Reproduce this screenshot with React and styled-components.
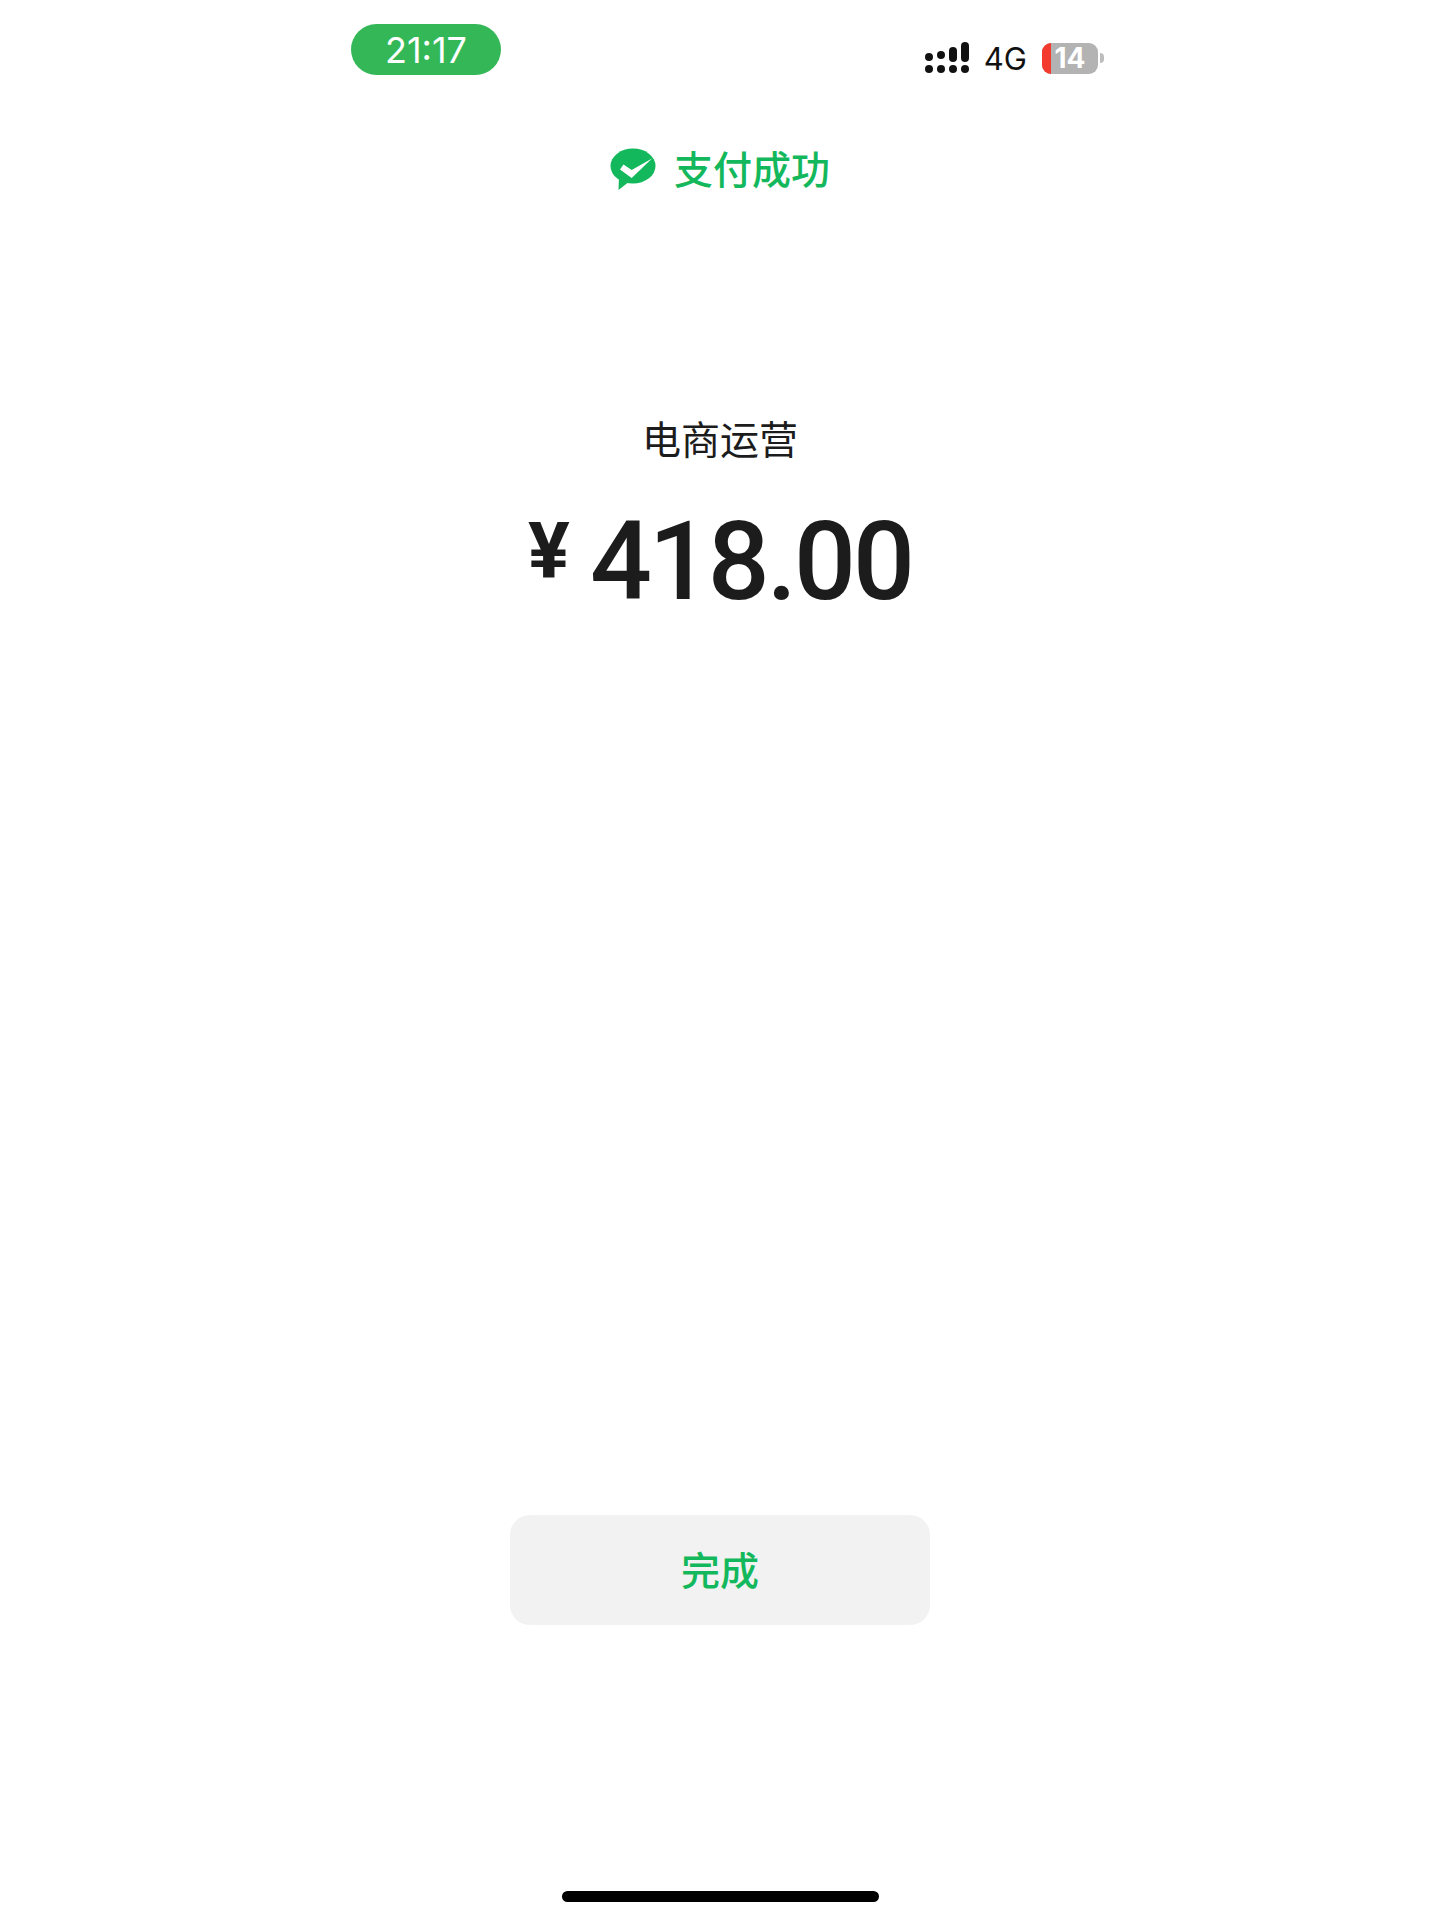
import React from "react";
import styled, { createGlobalStyle } from "styled-components";

const Global = createGlobalStyle`
  html, body { margin: 0; padding: 0; background: #fff; }
`;

const CJK = `"Noto Sans CJK SC", "Noto Sans", sans-serif`;

const Page = styled.div`
  width: 1440px;
  height: 1920px;
  display: flex;
  flex-direction: column;
  align-items: center;
  background: #fff;
  overflow: hidden;
`;

const StatusBar = styled.header`
  width: 780px;
  height: 100px;
  box-sizing: border-box;
  padding: 24px 6px 0 21px;
  display: flex;
  justify-content: space-between;
  align-items: flex-start;
`;

const TimePill = styled.div`
  width: 150px;
  height: 51px;
  border-radius: 26px;
  background: #34b857;
  color: #fff;
  display: flex;
  align-items: center;
  justify-content: center;
  font: 400 36px/1 Inter, "Liberation Sans", sans-serif;
`;

const Indicators = styled.div`
  display: flex;
  align-items: center;
  height: 32px;
  margin-top: 18px;
`;

const NetworkLabel = styled.span`
  font: 400 31px/1 Inter, "Liberation Sans", sans-serif;
  color: #111;
  margin: 0 15px;
`;

const Battery = styled.div`
  position: relative;
  width: 56px;
  height: 31px;
  border-radius: 9px;
  background: #b3b3b3;
  overflow: hidden;
  color: #fff;
  display: flex;
  align-items: center;
  justify-content: center;
  box-sizing: border-box;
  font: 700 28px/1 Inter, "Liberation Sans", sans-serif;
`;

const BatteryLevel = styled.div`
  position: absolute;
  left: 0;
  top: 0;
  bottom: 0;
  width: 9px;
  background: #f4392f;
`;

const BatteryCap = styled.div`
  width: 4px;
  height: 10px;
  margin-left: 2px;
  border-radius: 0 4px 4px 0;
  background: #bdbdbd;
`;

const Title = styled.div`
  display: flex;
  align-items: center;
  gap: 18px;
  margin-top: 48px;
  height: 42px;
  color: #14b85c;
  font: 500 39px/42px ${CJK};
`;

const TitleText = styled.span`
  padding-bottom: 4px;
`;

const Merchant = styled.div`
  margin-top: 219px;
  height: 56px;
  color: #1c1c1c;
  font: 400 39px/56px ${CJK};
`;

const Amount = styled.div`
  margin-top: 42px;
  display: flex;
  align-items: flex-start;
  gap: 20px;
  height: 110px;
  color: #1c1c1c;
  font-family: Roboto, "Liberation Sans", sans-serif;
  font-weight: 500;
`;

const Currency = styled.span`
  font-size: 78px;
  line-height: 90px;
  font-weight: 700;
`;

const Value = styled.span`
  font-size: 109px;
  line-height: 110px;
  letter-spacing: -3px;
`;

const Spacer = styled.div`
  flex: 1;
`;

const DoneButton = styled.button`
  width: 420px;
  height: 110px;
  border: 0;
  border-radius: 20px;
  background: #f2f2f2;
  color: #14b85c;
  font: 500 39px/1 ${CJK};
  padding: 0 0 4px;
`;

const HomeBar = styled.div`
  width: 317px;
  height: 11px;
  margin: 266px 0 18px;
  border-radius: 6px;
  background: #000;
`;

const SignalIcon = () => (
  <svg width="44" height="32" viewBox="0 0 44 32" fill="#111" aria-hidden="true">
    <circle cx="4" cy="15" r="4" />
    <circle cx="4" cy="27" r="4" />
    <circle cx="16" cy="13" r="4" />
    <circle cx="16" cy="27" r="4" />
    <rect x="24" y="5" width="8" height="15" rx="4" />
    <circle cx="28" cy="27" r="4" />
    <rect x="36" y="0" width="8" height="20" rx="4" />
    <circle cx="40" cy="27" r="4" />
  </svg>
);

const WechatIcon = () => (
  <svg width="46" height="42" viewBox="0 0 46 42" aria-hidden="true">
    <ellipse cx="23" cy="18" rx="22.5" ry="17.5" fill="#14b85c" />
    <path d="M9 28 L8.5 42 L20 33 Z" fill="#14b85c" />
    <path d="M10 21.5 L13.5 16.5 L21.7 22 L42 10.5 L21.7 30 Z" fill="#fff" />
  </svg>
);

export default function App() {
  return (
    <Page>
      <Global />
      <StatusBar>
        <TimePill>21:17</TimePill>
        <Indicators>
          <SignalIcon />
          <NetworkLabel>4G</NetworkLabel>
          <Battery>
            <BatteryLevel />
            14
          </Battery>
          <BatteryCap />
        </Indicators>
      </StatusBar>
      <Title>
        <WechatIcon />
        <TitleText>支付成功</TitleText>
      </Title>
      <Merchant>电商运营</Merchant>
      <Amount>
        <Currency>¥</Currency>
        <Value>418.00</Value>
      </Amount>
      <Spacer />
      <DoneButton>完成</DoneButton>
      <HomeBar />
    </Page>
  );
}
